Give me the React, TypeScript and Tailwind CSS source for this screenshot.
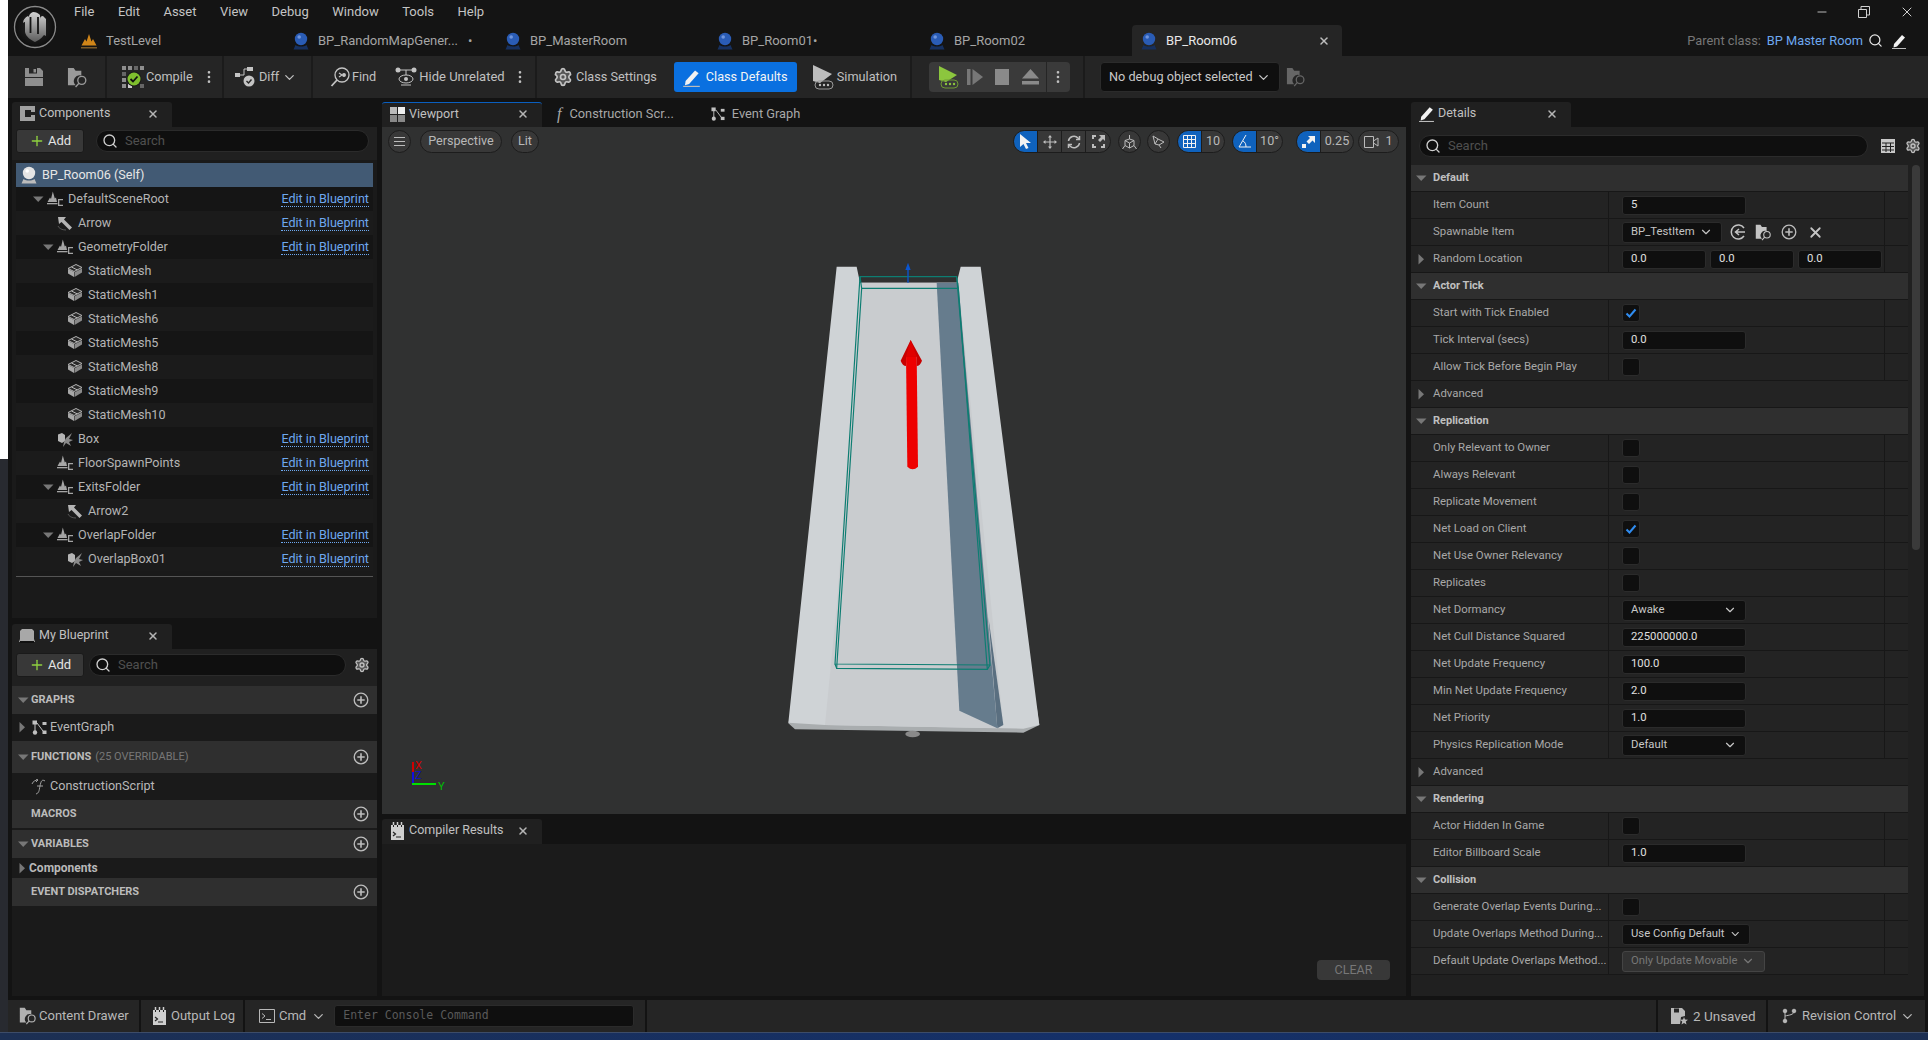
import { ChevronDown, Search, Settings, X, Plus, Minus, MoreVertical } from "lucide-react";
import React from "react";

const Caret = ({ open, className = "" }: { open: boolean; className?: string }) => (
    <svg width="11" height="11" viewBox="0 0 11 11" className={className}>
        {open ? <path d="M0 2.5h10.5L5.2 8z" fill="#777" /> : <path d="M2.5 0v10.5L8 5.2z" fill="#777" />}
    </svg>
);

const BlueprintIcon = ({ white }: { white?: boolean }) => (
    <svg width="18" height="20" viewBox="0 0 18 20">
        <circle cx="9" cy="8" r="6.200" fill={white ? "#e4e4e4" : "#2a5cb5"} />
        <circle cx="7.200" cy="6" r="1.800" fill={white ? "#fff" : "#6e94dc"} />
        <path d="M1.500 18.500 3.500 14c3 2 8 2 11 0l2 4.500z" fill={white ? "#bcbcbc" : "#16305f"} />
    </svg>
);

const LevelIcon = () => (
    <svg width="18" height="18" viewBox="0 0 18 18">
        <path d="M1.500 13.500 5 7l1.500 2.500L9 2l2.500 7.500L13 7l3.500 6.500z" fill="#d08518" />
        <rect x="1" y="15" width="16" height="1.500" fill="#7a5a28" />
    </svg>
);

const SceneIcon = () => (
    <svg width="17" height="16" viewBox="0 0 17 16">
        <path d="M0.500 11 3 6.500l1 1.500 1.800-7.500 2 7 1.200-1 1 4.500z" fill="#a5a5a5" />
        <rect x="0" y="12" width="10.500" height="1.300" fill="#a5a5a5" />
        <path d="M11 8h5v1.300h-3.700v4.400H16V15h-5z" fill="#a5a5a5" />
    </svg>
);

const ArrowIcon = () => (
    <svg width="16" height="15" viewBox="0 0 16 15">
        <path d="M1 1h8L7 3.500l8 8-2.500 2.500-8-8L2 8z" fill="#b5b5b5" />
        <path d="M1 10c1 2.500 4 4 8 4" stroke="#555" fill="none" />
    </svg>
);

const MeshIcon = () => (
    <svg width="16" height="16" viewBox="0 0 16 16">
        <path d="M1 5.500 9 1.500l6 3-8 4z" fill="#2a2a2a" stroke="#b5b5b5" />
        <path d="M1 6v4.500l6 3.500V9z" fill="#a8a8a8" />
        <path d="M7.500 14l7.500-4.500V5.500L7.500 9.200z" fill="#8a8a8a" />
        <path d="m4.500 4 6 3" stroke="#b5b5b5" />
    </svg>
);

const BoxIcon = () => (
    <svg width="16" height="15" viewBox="0 0 16 15">
        <path d="M1 2.500 5 1l3 2v6l-3 2-4-2z" fill="#b5b5b5" />
        <path d="m9 6 6-5-3 6 4 1-4 2 2 4-5-3-3 4 1-5z" fill="#8a8a8a" />
    </svg>
);

const PlusCircle = () => (
    <svg width="16" height="16" viewBox="0 0 16 16" fill="none" stroke="#bdbdbd" strokeWidth="1.300">
        <circle cx="8" cy="8" r="6.800" />
        <path d="M8 4.300v7.400M4.300 8h7.400" strokeWidth="1.600" />
    </svg>
);

const GearIcon = ({ size = 16, color = "#c0c0c0" }: { size?: number; color?: string }) => (
    <Settings size={size} style={{ color }} fill="#555" strokeWidth={2} />
);

const GraphIcon = ({ size = 15 }: { size?: number }) => (
    <svg width={size} height={size} viewBox="0 0 15 15" fill="#c0c0c0">
        <rect x="0.500" y="0.500" width="4.500" height="4" />
        <rect x="10.500" y="2" width="4" height="3" />
        <circle cx="3" cy="12.500" r="2.200" />
        <rect x="10.500" y="10.500" width="4" height="3.500" />
        <path d="M3 4v7M5 3l6 8" stroke="#c0c0c0" strokeWidth="1" />
    </svg>
);

const LogIcon = () => (
    <svg width="13" height="18" viewBox="0 0 13 18">
        <path d="M0 3h13v15H0z" fill="#cfcfcf" />
        <path d="M2.500 0v4M6.500 0v4M10.500 0v4" stroke="#cfcfcf" strokeWidth="1.500" />
        <path d="M2.500 3v2M6.500 3v2M10.500 3v2" stroke="#222" />
        <path d="m2 10 2.500 2L2 14M5 15h5" stroke="#222" strokeWidth="1.200" fill="none" />
    </svg>
);

const FolderSearch = ({ color = "#a8a8a8", size = 22 }: { color?: string; size?: number }) => (
    <svg width={size} height={size} viewBox="0 0 22 22">
        <path d="M1 1h6l2 3h6v5a6 6 0 0 0-6 10H1z" fill={color} />
        <circle cx="15.500" cy="14" r="4.200" fill="none" stroke={color} strokeWidth="1.400" />
        <path d="m12.500 17-3.500 4" stroke={color} strokeWidth="1.400" />
    </svg>
);

const PenIcon = ({ size = 16 }: { size?: number }) => (
    <svg width={size} height={size} viewBox="0 0 16 16">
        <path d="m3 11 8-9 3 2.500-8 9-3.500 1z" fill="#f2f2f2" />
        <path d="M1 15.500h14" stroke="#bbb" />
    </svg>
);

const PlayGreen = () => (
    <svg width="22" height="24" viewBox="0 0 22 24">
        <path d="M2 1v14l7 2 11-7z" fill="#8cc63e" />
        <rect x="4" y="15" width="17" height="8" rx="4" fill="none" stroke="#6f9a34" />
        <circle cx="9" cy="19" r="1.200" fill="#8cc63e" /><circle cx="13" cy="19" r="1.200" fill="#8cc63e" /><circle cx="17" cy="19" r="1.200" fill="#8cc63e" />
    </svg>
);

function Tab({ label, active, icon, mark }: { label: string; active?: boolean; icon: React.ReactNode; mark?: string }) {
    return (
        <div className={`flex h-[31px] items-center whitespace-nowrap pl-2 text-[13px] ${active ? "w-[210px] rounded-t bg-[#252525] text-[#e8e8e8]" : "w-[212px] text-[#a5a5a5]"}`}>
            {icon}
            <span className="ml-2">{label}</span>
            {mark && <span className="ml-2.5">{mark}</span>}
            {active && <X size={12} strokeWidth={3} className="ml-auto mr-3 text-[#bdbdbd]" />}
        </div>
    );
}

function TitleBar() {
    return (
        <div className="flex h-14 bg-[#141414]">
            <div className="w-16 pl-1 pt-1">
                <svg width="46" height="46" viewBox="0 0 46 46">
                    <defs>
                        <linearGradient id="ue" x1="0" y1="0" x2="0" y2="1">
                            <stop offset="0" stopColor="#d4d4d4" />
                            <stop offset="1" stopColor="#5c5c5c" />
                        </linearGradient>
                        <radialGradient id="uebg">
                            <stop offset="0" stopColor="#2c2c2c" />
                            <stop offset="1" stopColor="#0e0e0e" />
                        </radialGradient>
                    </defs>
                    <circle cx="23" cy="23" r="20.500" fill="url(#uebg)" stroke="#8a8a8a" strokeWidth="1.300" />
                    <path d="M16 12c-3 1.500-5 4-5 7 1-1 1.500-1 2-1v10c1 5 6 8 10 10 2-1 6-3 9-7l2 1V15l-3-3c-2 0-3 1-3 3V11c-2-2-4-3-7-3-3 1-4 3-4 5z" fill="url(#ue)" />
                    <path d="M18.500 13v16M26 13v17" stroke="#151515" strokeWidth="1.800" />
                </svg>
            </div>
            <div className="min-w-0 flex-1">
                <div className="flex h-[24px]">
                    <div className="flex items-center gap-[23.500px] pl-[2px] text-[13px] text-[#c4c4c4]">
                        {["File", "Edit", "Asset", "View", "Debug", "Window", "Tools", "Help"].map((m) => (
                            <span key={m}>{m}</span>
                        ))}
                    </div>
                    <div className="ml-auto flex items-center gap-[29px] pr-[13px] text-[#d0d0d0]">
                        <Minus size={14} strokeWidth={1.500} />
                        <svg width="12" height="12" viewBox="0 0 12 12" fill="none" stroke="currentColor"><path d="M.5 3.500h8v8h-8zM3 3.500V.5h8.500V9H8.500" /></svg>
                        <X size={16} strokeWidth={1.500} />
                    </div>
                </div>
                <div className="mt-px flex h-[31px]">
                    <Tab label="TestLevel" icon={<LevelIcon />} />
                    <Tab label="BP_RandomMapGener..." mark="•" icon={<BlueprintIcon />} />
                    <Tab label="BP_MasterRoom" icon={<BlueprintIcon />} />
                    <Tab label="BP_Room01•" icon={<BlueprintIcon />} />
                    <Tab label="BP_Room02" icon={<BlueprintIcon />} />
                    <Tab label="BP_Room06" active icon={<BlueprintIcon />} />
                    <div className="ml-auto flex items-center whitespace-nowrap pr-[21px] text-[12.800px]">
                        <span className="text-[#777]">Parent class:</span>
                        <span className="ml-1.5 text-[#6ea8ef]">BP Master Room</span>
                        <Search size={15} className="ml-[5px] text-[#e8e8e8]" />
                        <span className="ml-2"><PenIcon /></span>
                    </div>
                </div>
            </div>
        </div>
    );
}

const Sep = () => <div className="h-[42px] w-0.5 bg-[#1b1b1b]" />;
const Kebab = ({ className = "" }: { className?: string }) => <MoreVertical size={16} className={`text-[#c0c0c0] ${className}`} />;

function Toolbar() {
    return (
        <div className="flex h-[42px] items-center whitespace-nowrap bg-[#252525] text-[12.700px] text-[#c0c0c0]">
            <div className="flex w-[97px] items-center pl-[17px]">
                <svg width="18" height="18" viewBox="0 0 18 18" fill="#8e8e8e">
                    <path d="M0 0h15l3 3v15H0z" />
                    <rect x="4" y="0" width="8" height="5.500" fill="#252525" />
                    <rect x="8.500" y="1" width="2.500" height="3.500" />
                    <rect x="0" y="9" width="18" height="1" fill="#252525" />
                </svg>
                <span className="ml-[24px]"><FolderSearch size={21} color="#9a9a9a" /></span>
            </div>
            <Sep />
            <div className="flex w-[115px] items-center pl-[15px]">
                <svg width="22" height="24" viewBox="0 0 22 24">
                    <g fill="#8e8e8e">
                        <rect x="0" y="1" width="4" height="4" /><rect x="6" y="1" width="4" height="4" /><rect x="12" y="1" width="4" height="4" fill="#666" /><rect x="18" y="1" width="4" height="4" />
                        <rect x="0" y="7" width="4" height="4" fill="#666" /><rect x="0" y="13" width="4" height="4" /><rect x="0" y="19" width="4" height="4" />
                        <rect x="6" y="19" width="4" height="4" fill="#ccc" /><rect x="18" y="19" width="4" height="4" fill="#666" />
                    </g>
                    <circle cx="12" cy="14" r="7.500" fill="#1b1b1b" />
                    <circle cx="12" cy="14" r="6.500" fill="#7fbf2e" />
                    <path d="m8.500 14 2.500 2.500 4.500-5" stroke="#111" strokeWidth="1.800" fill="none" />
                </svg>
                <span className="ml-[2px]">Compile</span>
                <Kebab className="ml-[8px]" />
            </div>
            <Sep />
            <div className="flex w-[87px] items-center pl-[11px]">
                <svg width="20" height="22" viewBox="0 0 20 22" fill="#c4c4c4">
                    <rect x="0" y="7" width="5" height="4" /><rect x="12" y="1" width="6" height="4" />
                    <path d="M5 9h4V3h3" stroke="#c4c4c4" fill="none" />
                    <circle cx="14" cy="15" r="5.500" />
                    <path d="m11.500 15 2 2 3-3.500" stroke="#252525" strokeWidth="1.400" fill="none" />
                </svg>
                <span className="ml-1">Diff</span>
                <ChevronDown size={15} className="ml-[3px]" />
            </div>
            <Sep />
            <div className="flex w-[222px] items-center pl-[17px]">
                <svg width="20" height="20" viewBox="0 0 20 20" fill="none" stroke="#c4c4c4" strokeWidth="1.300">
                    <circle cx="12" cy="8" r="7" />
                    <path d="m7 13-5.500 6" strokeWidth="1.800" />
                    <circle cx="14" cy="8" r="1.300" fill="#c4c4c4" /><path d="m9 6 3 2-3 2" />
                </svg>
                <span className="ml-0.5">Find</span>
                <svg width="22" height="20" viewBox="0 0 22 20" fill="#c4c4c4" className="ml-[19px]">
                    <circle cx="3" cy="3" r="2.500" /><circle cx="19" cy="3" r="2.500" />
                    <path d="M3 3h16M11 3v5" stroke="#c4c4c4" />
                    <ellipse cx="11" cy="12" rx="7" ry="4" fill="none" stroke="#c4c4c4" />
                    <circle cx="11" cy="12" r="2" />
                    <path d="M6 18h10" stroke="#c4c4c4" />
                </svg>
                <span className="ml-0.5 text-[13px]">Hide Unrelated</span>
                <Kebab className="ml-[7px]" />
            </div>
            <Sep />
            <div className="flex w-[373px] items-center pl-4">
                <GearIcon size={20} color="#c4c4c4" />
                <span className="ml-[3px]">Class Settings</span>
                <div className="ml-[17px] flex h-[30px] w-[123px] items-center rounded-[3px] bg-[#0a70e0] pl-2 text-[#f4f4f4]">
                    <PenIcon size={19} />
                    <span className="ml-[5px]">Class Defaults</span>
                </div>
                <svg width="22" height="26" viewBox="0 0 22 26" className="ml-[15px]">
                    <path d="M1 1v16l7 2 12-9z" fill="#bdbdbd" />
                    <rect x="3" y="17" width="18" height="8" rx="4" fill="none" stroke="#9a9a9a" />
                    <circle cx="8" cy="21" r="1.200" fill="#bdbdbd" /><circle cx="12" cy="21" r="1.200" fill="#bdbdbd" /><circle cx="16" cy="21" r="1.200" fill="#bdbdbd" />
                </svg>
                <span className="ml-[3px]">Simulation</span>
            </div>
            <Sep />
            <div className="flex w-[171px] items-center pl-[17px]">
                <div className="flex h-[30px] w-[141px] items-center rounded bg-[#3a3a3a]">
                    <span className="ml-2"><PlayGreen /></span>
                    <svg width="18" height="18" viewBox="0 0 18 18" fill="#777" className="ml-[7px]"><rect x="1" y="1" width="3.500" height="16" /><path d="M6.500 1v16L17 9z" /></svg>
                    <svg width="14" height="16" viewBox="0 0 14 16" fill="#8a8a8a" className="ml-[11px]"><rect width="14" height="16" /></svg>
                    <svg width="17" height="16" viewBox="0 0 17 16" fill="#8a8a8a" className="ml-[13px]"><path d="M8.500 0 17 9.500H0z" /><rect y="12" width="17" height="3.500" /></svg>
                    <div className="ml-[7px] h-[30px] w-px bg-[#252525]" />
                    <Kebab className="ml-[3px]" />
                </div>
            </div>
            <Sep />
            <div className="ml-[15px] flex h-[30px] w-[180px] items-center rounded border border-[#2b2b2b] bg-[#0f0f0f] pl-2 text-[#c8c8c8]">
                <span>No debug object selected</span>
                <ChevronDown size={15} className="ml-[3px]" />
            </div>
            <span className="ml-[6px]"><FolderSearch color="#666" size={20} /></span>
        </div>
    );
}

function PanelTab({ label, icon, width = "w-[160px]", bar }: { label: string; icon: React.ReactNode; width?: string; bar?: boolean }) {
    return (
        <div className={`flex h-[25px] items-center whitespace-nowrap rounded-t-[3px] bg-[#202020] pb-0.5 pl-1 text-[12.500px] text-[#c0c0c0] ${width} ${bar ? "border-t border-[#0a5fc0]" : ""}`}>
            <span className="flex w-[22px] justify-center">{icon}</span>
            <span className="ml-px">{label}</span>
            <X size={12} strokeWidth={3} className="ml-auto mr-[13px] text-[#b5b5b5]" />
        </div>
    );
}

function AddButton() {
    return (
        <div className="flex h-6 w-[68px] items-center rounded-[3px] border border-[#1a1a1a] bg-[#383838] pl-3 text-[13px] text-[#e4e4e4]">
            <Plus size={16} strokeWidth={2} className="text-[#8fd13f]" />
            <span className="ml-[3px]">Add</span>
        </div>
    );
}

function SearchBox({ className = "" }: { className?: string }) {
    return (
        <div className={`flex h-[22px] items-center rounded-full border border-[#2b2b2b] bg-[#0f0f0f] pl-[5px] text-[13px] text-[#4f4f4f] ${className}`}>
            <Search size={16} className="text-[#d0d0d0]" />
            <span className="ml-[7px]">Search</span>
        </div>
    );
}

const TREE: [string, number, "scene" | "arrow" | "mesh" | "box", boolean | null, boolean][] = [
    ["DefaultSceneRoot", 0, "scene", true, true],
    ["Arrow", 1, "arrow", null, true],
    ["GeometryFolder", 1, "scene", true, true],
    ["StaticMesh", 2, "mesh", null, false],
    ["StaticMesh1", 2, "mesh", null, false],
    ["StaticMesh6", 2, "mesh", null, false],
    ["StaticMesh5", 2, "mesh", null, false],
    ["StaticMesh8", 2, "mesh", null, false],
    ["StaticMesh9", 2, "mesh", null, false],
    ["StaticMesh10", 2, "mesh", null, false],
    ["Box", 1, "box", null, true],
    ["FloorSpawnPoints", 1, "scene", null, true],
    ["ExitsFolder", 1, "scene", true, true],
    ["Arrow2", 2, "arrow", null, false],
    ["OverlapFolder", 1, "scene", true, true],
    ["OverlapBox01", 2, "box", null, true],
];

const INDENT = ["pl-[17px]", "pl-[27px]", "pl-[37px]"];

function ComponentsPanel() {
    return (
        <div className="flex h-[516px] flex-col">
            <PanelTab
                label="Components"
                icon={<svg width="15" height="15" viewBox="0 0 15 15" fill="#a0a0a0"><path d="M0 0h15v6h-4V4H5v7h6V9h4v6H0z" /></svg>}
            />
            <div className="flex-1 bg-[#1a1a1a]">
                <div className="flex h-[33px] items-center bg-[#202020] pb-[5px] pl-1">
                    <AddButton />
                    <SearchBox className="ml-3 w-[273px]" />
                </div>
                <div className="mx-1 mt-[3px]">
                    <div className="flex h-6 items-center bg-[#425a74] pl-1 text-[12.600px] text-[#e6e6e6]">
                        <BlueprintIcon white />
                        <span className="ml-1">BP_Room06 (Self)</span>
                    </div>
                    {TREE.map(([name, depth, kind, open, link], i) => (
                        <div key={name} className={`flex h-6 items-center pr-1 text-[12.600px] text-[#b4b4b4] ${INDENT[depth]} ${i % 2 === 0 ? "bg-[#151515]" : "bg-[#1b1b1b]"}`}>
                            <span className="flex w-[11px] justify-center">{open !== null && <Caret open={open} />}</span>
                            <span className="ml-[2px] flex w-[18px] justify-center">
                                {kind === "scene" && <SceneIcon />}
                                {kind === "arrow" && <ArrowIcon />}
                                {kind === "mesh" && <MeshIcon />}
                                {kind === "box" && <BoxIcon />}
                            </span>
                            <span className="ml-1">{name}</span>
                            {link && (
                                <span className="ml-auto border-b border-dotted border-[#6ea8ef] leading-[15px] text-[#6ea8ef]">Edit in Blueprint</span>
                            )}
                        </div>
                    ))}
                    <div className="mt-[5px] h-px bg-[#555]" />
                </div>
            </div>
        </div>
    );
}

function BpSection({ title, note, open, h = "h-7" }: { title: string; note?: string; open: boolean; h?: string }) {
    return (
        <div className={`flex items-center whitespace-nowrap bg-[#2f2f2f] pl-1.5 pr-2 text-[11px] font-bold text-[#bcbcbc] ${h}`}>
            <span className="flex w-[13px]">{open && <Caret open />}</span>
            <span>{title}</span>
            {note && <span className="ml-1 font-normal text-[#777]">{note}</span>}
            <span className="ml-auto"><PlusCircle /></span>
        </div>
    );
}

function MyBlueprint() {
    return (
        <div className="mt-1.5 flex flex-1 flex-col">
            <PanelTab
                label="My Blueprint"
                icon={<svg width="16" height="16" viewBox="0 0 16 16"><path d="M1 3 3 1h10l2 2v8l1 3H0l1-3z" fill="#a8a8a8" /><path d="M1 13h14v2H1z" fill="#111" /></svg>}
            />
            <div className="flex-1 bg-[#1a1a1a]">
                <div className="flex h-[37px] items-center bg-[#202020] pb-[5px] pl-1">
                    <AddButton />
                    <SearchBox className="ml-[5px] w-[257px]" />
                    <span className="ml-2"><GearIcon /></span>
                </div>
                <BpSection title="GRAPHS" open />
                <div className="flex h-[27px] items-center pl-[5px] text-[12.600px] text-[#b8b8b8]">
                    <Caret open={false} />
                    <span className="ml-1"><GraphIcon /></span>
                    <span className="ml-[3px]">EventGraph</span>
                </div>
                <BpSection title="FUNCTIONS" note="(25 OVERRIDABLE)" open h="h-8" />
                <div className="flex h-[27px] items-center pl-[19px] text-[12.600px] text-[#b8b8b8]">
                    <svg width="16" height="16" viewBox="0 0 16 16" fill="none" stroke="#a0a0a0">
                        <path d="M1 5c1-3 4-4 6-4M5 0l2 1-2 2M14 2c-3-2-4 0-5 5s-1 7-4 8M6 7h6" />
                    </svg>
                    <span className="ml-[3px]">ConstructionScript</span>
                </div>
                <BpSection title="MACROS" open={false} />
                <div className="h-0.5" />
                <BpSection title="VARIABLES" open />
                <div className="flex h-5 items-center pl-[5px] text-[12px] font-bold text-[#b8b8b8]">
                    <Caret open={false} />
                    <span className="ml-px">Components</span>
                </div>
                <BpSection title="EVENT DISPATCHERS" open={false} />
            </div>
        </div>
    );
}

const Seg = ({ children, blue }: { children: React.ReactNode; blue?: boolean }) => (
    <div className={`flex h-full w-6 shrink-0 items-center justify-center border-r border-[#1c1c1c] last:border-r-0 ${blue ? "bg-[#0f62bd]" : ""}`}>{children}</div>
);

const Pill = ({ children, className = "" }: { children: React.ReactNode; className?: string }) => (
    <div className={`flex h-[23px] shrink-0 items-center overflow-hidden rounded-full border border-[#1c1c1c] bg-[#383838] text-[12.600px] text-[#b8b8b8] ${className}`}>{children}</div>
);

function ViewportBar() {
    return (
        <div className="flex h-[29px] items-center pl-1.5 pr-[7px]">
            <Pill className="w-[23px] justify-center">
                <svg width="11" height="11" viewBox="0 0 11 11" stroke="#bbb"><path d="M0 1.500h11M0 5.500h11M0 9.500h11" /></svg>
            </Pill>
            <Pill className="ml-[9px] w-[82px] justify-center">Perspective</Pill>
            <Pill className="ml-[9px] w-[28px] justify-center">Lit</Pill>
            <Pill className="ml-auto w-[98px]">
                <Seg blue>
                    <svg width="13" height="15" viewBox="0 0 13 15" fill="#f2f2f2"><path d="M1 0v13l3.500-3 2.500 5 2.500-1-2.500-5H12z" /></svg>
                </Seg>
                <Seg>
                    <svg width="14" height="14" viewBox="0 0 14 14" stroke="#bdbdbd" fill="#bdbdbd"><path d="M7 1v12M1 7h12" strokeWidth="1.200" /><path d="m7 0 2 2.500H5zM7 14l2-2.500H5zM0 7l2.500-2v4zM14 7l-2.500-2v4z" stroke="none" /></svg>
                </Seg>
                <Seg>
                    <svg width="14" height="14" viewBox="0 0 14 14" fill="none" stroke="#bdbdbd" strokeWidth="1.500"><path d="M1.500 6A5.500 5.500 0 0 1 11 3l1.500 1.500M12.500 8A5.500 5.500 0 0 1 3 11L1.500 9.500" /><path d="M12.500 1v3.500H9M1.500 13V9.500H5" /></svg>
                </Seg>
                <Seg>
                    <svg width="13" height="13" viewBox="0 0 13 13" fill="#bdbdbd"><path d="M7 0h6v6L11 4 8 7 6 5l3-3zM0 9h2v2h2v2H0zM0 0h4v2H2v2H0zM11 9h2v4H9v-2h2z" /></svg>
                </Seg>
            </Pill>
            <Pill className="ml-[7px] w-[23px] justify-center">
                <svg width="15" height="16" viewBox="0 0 15 16" fill="none" stroke="#bdbdbd"><path d="M7.500 1v4M3 6.500 7.500 5 12 6.500v5L7.500 14 3 11.500zM7.500 9v5M3 6.500 7.500 9 12 6.500M3 11.500.5 15M12 11.500l2.500 3.500" /></svg>
            </Pill>
            <Pill className="ml-1.5 w-[23px] justify-center">
                <svg width="15" height="15" viewBox="0 0 15 15" fill="none" stroke="#bdbdbd"><path d="m2 2 5 3-3 5zm5 3 6 3-5 3-4-1M8 11l2 3" /></svg>
            </Pill>
            <Pill className="ml-[7px] w-12">
                <Seg blue>
                    <svg width="13" height="13" viewBox="0 0 13 13" fill="none" stroke="#f2f2f2"><path d="M.5.5h12v12H.5zM4.500.5v12M8.500.5v12M.5 4.500h12M.5 8.500h12" /></svg>
                </Seg>
                <span className="flex-1 text-center">10</span>
            </Pill>
            <Pill className="ml-[7px] w-[51px]">
                <Seg blue>
                    <svg width="14" height="13" viewBox="0 0 14 13" fill="none" stroke="#f2f2f2"><path d="M8 0 1 12h12M5 6c2 1 3 3 3 6" /></svg>
                </Seg>
                <span className="flex-1 text-center">10°</span>
            </Pill>
            <Pill className="ml-[13px] w-[58px]">
                <Seg blue>
                    <svg width="13" height="13" viewBox="0 0 13 13" fill="#f2f2f2"><rect y="9" width="4" height="4" /><path d="M6 1h7v7l-2.500-2.500L7 9 4.500 6.500 8 3z" /></svg>
                </Seg>
                <span className="flex-1 text-center">0.25</span>
            </Pill>
            <Pill className="ml-1 w-[41px] justify-center gap-1.5">
                <svg width="15" height="12" viewBox="0 0 15 12" fill="none" stroke="#bbb"><path d="M.5.5h9v11h-9zM9.500 5 14 2v8L9.500 7" /></svg>
                <span>1</span>
            </Pill>
        </div>
    );
}

function Scene() {
    return (
        <svg width="320" height="520" viewBox="0 0 960 1560" className="absolute left-[358px] top-[113px]">
            <path d="M145 1450 165 1468 850 1478 898 1455 890 1400H160z" fill="#a9adaf" />
            <path d="M290 80H350L360 128H650L662 80H722L898 1455 850 1466 255 1455 145 1448z" fill="#cfd3d6" />
            <path d="M362 128H655L790 1455 772 1465 255 1455 290 1100z" fill="#c9ccCF" />
            <path d="M590 128H655L772 1465 658 1412z" fill="#667c8d" />
            <path d="M745 1130 790 1455 772 1465z" fill="#5a6f80" />
            <g fill="none" stroke="#0d7d72" strokeWidth="3.500">
                <path d="M360 110H650L750 1275 285 1272z" />
                <path d="M365 145H655L742 1288 290 1285z" />
                <path d="M360 110 365 145M650 112 655 145M285 1272 290 1285M750 1275 742 1288" />
            </g>
            <path d="M504 68 496 90H502V128H506V90H512z" fill="#0a55cf" />
            <path d="M498 345H530L534 680Q518 695 502 680z" fill="#ee0000" />
            <path d="M512 300 482 362Q488 378 498 378V350H530V378Q540 378 546 362z" fill="#c80000" />
            <path d="M512 300 498 350H530z" fill="#e00000" />
            <ellipse cx="518" cy="1482" rx="22" ry="10" fill="#8a8a8a" />
        </svg>
    );
}

function Axes() {
    return (
        <div className="absolute left-[30px] top-[635px] h-[30px] w-[40px] text-[11px] leading-none">
            <div className="absolute left-0 top-0 h-[10px] w-0.5 bg-[#d00000]" />
            <div className="absolute left-0 top-[10px] h-[12px] w-0.5 bg-[#1010e0]" />
            <div className="absolute left-0 top-[21px] h-0.5 w-6 bg-[#00e000]" />
            <span className="absolute left-[3px] top-[-2px] text-[#d00000]">X</span>
            <span className="absolute left-[3px] top-[8px] text-[#1010c0]">Z</span>
            <span className="absolute left-[26px] top-[19px] text-[#00c000]">Y</span>
        </div>
    );
}

function CenterColumn() {
    return (
        <div className="ml-[5px] flex w-[1024px] flex-col">
            <div className="flex h-[25px]">
                <PanelTab
                    label="Viewport"
                    bar
                    icon={<svg width="15" height="15" viewBox="0 0 15 15"><rect width="7" height="7" fill="#bbb" /><rect x="8" width="7" height="7" fill="#eee" /><rect y="8" width="7" height="7" fill="#888" /><rect x="8" y="8" width="7" height="7" fill="#888" /></svg>}
                />
                <div className="flex items-center whitespace-nowrap pb-0.5 pl-[15px] text-[12.800px] text-[#a8a8a8]">
                    <span className="font-[family-name:'Liberation_Serif',serif] text-[16px] italic">f</span>
                    <span className="ml-2">Construction Scr...</span>
                    <span className="ml-[37px]"><GraphIcon size={14} /></span>
                    <span className="ml-[7px]">Event Graph</span>
                </div>
            </div>
            <div className="relative h-[687px] bg-[#303131]">
                <ViewportBar />
                <Scene />
                <Axes />
            </div>
            <div className="mt-[5px]">
                <PanelTab label="Compiler Results" icon={<LogIcon />} />
            </div>
            <div className="flex flex-1 items-end justify-end bg-[#1b1b1b] pb-4 pr-4">
                <div className="flex h-5 w-[73px] items-center justify-center rounded-sm bg-[#383838] text-[12.500px] text-[#777]">CLEAR</div>
            </div>
        </div>
    );
}

type Row =
    | { k: "head"; l: string }
    | { k: "text"; l: string; v: string }
    | { k: "drop"; l: string; v: string; w: string; dim?: boolean }
    | { k: "check"; l: string; on?: boolean }
    | { k: "exp"; l: string }
    | { k: "vec"; l: string }
    | { k: "spawn"; l: string };

const ROWS: Row[] = [
    { k: "head", l: "Default" },
    { k: "text", l: "Item Count", v: "5" },
    { k: "spawn", l: "Spawnable Item" },
    { k: "vec", l: "Random Location" },
    { k: "head", l: "Actor Tick" },
    { k: "check", l: "Start with Tick Enabled", on: true },
    { k: "text", l: "Tick Interval (secs)", v: "0.0" },
    { k: "check", l: "Allow Tick Before Begin Play" },
    { k: "exp", l: "Advanced" },
    { k: "head", l: "Replication" },
    { k: "check", l: "Only Relevant to Owner" },
    { k: "check", l: "Always Relevant" },
    { k: "check", l: "Replicate Movement" },
    { k: "check", l: "Net Load on Client", on: true },
    { k: "check", l: "Net Use Owner Relevancy" },
    { k: "check", l: "Replicates" },
    { k: "drop", l: "Net Dormancy", v: "Awake", w: "w-[124px]" },
    { k: "text", l: "Net Cull Distance Squared", v: "225000000.0" },
    { k: "text", l: "Net Update Frequency", v: "100.0" },
    { k: "text", l: "Min Net Update Frequency", v: "2.0" },
    { k: "text", l: "Net Priority", v: "1.0" },
    { k: "drop", l: "Physics Replication Mode", v: "Default", w: "w-[124px]" },
    { k: "exp", l: "Advanced" },
    { k: "head", l: "Rendering" },
    { k: "check", l: "Actor Hidden In Game" },
    { k: "text", l: "Editor Billboard Scale", v: "1.0" },
    { k: "head", l: "Collision" },
    { k: "check", l: "Generate Overlap Events During..." },
    { k: "drop", l: "Update Overlaps Method During...", v: "Use Config Default", w: "w-[128px]" },
    { k: "drop", l: "Default Update Overlaps Method...", v: "Only Update Movable", w: "w-[143px]", dim: true },
];

const Field = ({ v, w = "w-[124px]" }: { v: string; w?: string }) => (
    <div className={`flex h-[19px] items-center rounded-[3px] border border-[#2b2b2b] bg-[#0f0f0f] pl-2 text-[11.300px] text-[#e0e0e0] ${w}`}>{v}</div>
);

function Value({ row }: { row: Row }) {
    if (row.k === "text") return <Field v={row.v} />;
    if (row.k === "vec")
        return (
            <div className="flex gap-1">
                <Field v="0.0" w="w-[84px]" />
                <Field v="0.0" w="w-[84px]" />
                <Field v="0.0" w="w-[84px]" />
            </div>
        );
    if (row.k === "check")
        return (
            <div className="flex h-[18px] w-[18px] items-center justify-center rounded-[3px] border border-[#2b2b2b] bg-[#0f0f0f]">
                {row.on && (
                    <svg width="12" height="12" viewBox="0 0 12 12" fill="none" stroke="#2f8cf0" strokeWidth="2"><path d="m1.500 6.500 3 3 6-7" /></svg>
                )}
            </div>
        );
    if (row.k === "drop")
        return (
            <div className={`flex h-[21px] items-center whitespace-nowrap rounded-[3px] border pl-2 pr-2 text-[11.300px] ${row.w} ${row.dim ? "border-[#444] bg-[#323232] text-[#777]" : "border-[#2b2b2b] bg-[#0f0f0f] text-[#c8c8c8]"}`}>
                <span>{row.v}</span>
                <ChevronDown size={14} className={`${row.w === "w-[124px]" ? "ml-auto" : "ml-1"}`} />
            </div>
        );
    if (row.k === "spawn")
        return (
            <div className="flex items-center text-[#c4c4c4]">
                <div className="flex h-[21px] w-[100px] items-center whitespace-nowrap rounded-[3px] border border-[#2b2b2b] bg-[#0f0f0f] pl-2 text-[11.300px]">
                    <span>BP_TestItem</span>
                    <ChevronDown size={14} className="ml-1" />
                </div>
                <svg width="16" height="16" viewBox="0 0 16 16" fill="none" stroke="currentColor" strokeWidth="1.500" className="ml-2"><path d="M14 4a7 7 0 1 0 0 8M15 8H6m3-3L5.500 8 9 11" /></svg>
                <span className="ml-[9px]"><FolderSearch color="#c4c4c4" size={17} /></span>
                <span className="ml-[9px]"><PlusCircle /></span>
                <X size={17} strokeWidth={2.500} className="ml-[10px]" />
            </div>
        );
    return null;
}

function Details() {
    return (
        <div className="ml-[5px] flex w-[513px] flex-col">
            <PanelTab label="Details" icon={<PenIcon size={17} />} />
            <div className="flex-1 bg-[#202020]">
                <div className="flex h-[38px] items-center pl-2">
                    <SearchBox className="w-[449px]" />
                    <svg width="14" height="14" viewBox="0 0 14 14" fill="#c8c8c8" className="ml-[13px]">
                        <path d="M0 0h14v14H0z" /><path d="M1 4h12M1 7.500h12M1 11h12M5 4v9M9.500 4v9" stroke="#202020" />
                    </svg>
                    <span className="ml-2.5"><GearIcon /></span>
                </div>
                <div className="flex">
                    <div className="w-[497px]">
                        {ROWS.map((row, i) =>
                            row.k === "head" ? (
                                <div key={i} className="flex h-[27px] items-center border-b border-[#171717] bg-[#2f2f2f] pl-[5px] text-[11px] font-bold text-[#c0c0c0]">
                                    <Caret open />
                                    <span className="ml-[6px]">{row.l}</span>
                                </div>
                            ) : row.k === "exp" ? (
                                <div key={i} className="flex h-[27px] items-center border-b border-[#171717] bg-[#232323] pl-[5px] text-[11.400px] text-[#a8a8a8]">
                                    <Caret open={false} />
                                    <span className="ml-[6px]">{row.l}</span>
                                </div>
                            ) : (
                                <div key={i} className="flex h-[27px] items-center border-b border-[#171717] bg-[#232323] text-[11.400px] text-[#a8a8a8]">
                                    <div className="flex h-full w-[198px] shrink-0 items-center whitespace-nowrap border-r border-[#171717] pl-[5px]">
                                        <span className="w-[11px]">{row.k === "vec" && <Caret open={false} />}</span>
                                        <span className="ml-[6px]">{row.l}</span>
                                    </div>
                                    <div className="flex h-full w-[276px] shrink-0 items-center border-r border-[#171717] pl-[13px]">
                                        <Value row={row} />
                                    </div>
                                </div>
                            )
                        )}
                    </div>
                    <div className="ml-1 w-2">
                        <div className="h-[385px] w-2 rounded bg-[#3a3a3a]" />
                    </div>
                </div>
            </div>
        </div>
    );
}

function StatusBar() {
    const cell = "flex h-8 items-center whitespace-nowrap bg-[#252525] text-[13px] text-[#b8b8b8]";
    return (
        <div className="flex h-8 gap-0.5 pr-[3px]">
            <div className={`${cell} w-[131px] pl-[11px]`}>
                <FolderSearch color="#b0b0b0" size={18} />
                <span className="ml-0.5">Content Drawer</span>
            </div>
            <div className={`${cell} w-[102px] pl-3`}>
                <LogIcon />
                <span className="ml-[5px]">Output Log</span>
            </div>
            <div className={`${cell} w-[400px] pl-3.5`}>
                <svg width="16" height="14" viewBox="0 0 16 14" fill="none" stroke="#b8b8b8"><path d="M.5.5h15v13H.5zM3 4.500 6 7l-3 2.500M7 10.500h5" /></svg>
                <span className="ml-1">Cmd</span>
                <ChevronDown size={15} className="ml-[5px]" />
                <div className="ml-2 flex h-[22px] w-[300px] items-center rounded-[3px] border border-[#2b2b2b] bg-[#0f0f0f] pl-2 font-[family-name:'DejaVu_Sans_Mono',monospace] text-[11.500px] text-[#5a5a5a]">
                    Enter Console Command
                </div>
            </div>
            <div className={`${cell} flex-1`} />
            <div className={`${cell} w-[108px] pl-[13px]`}>
                <svg width="17" height="17" viewBox="0 0 17 17" fill="#b8b8b8">
                    <path d="M0 0h11l3 3v5l-4 1-1 7H0z" />
                    <rect x="3" y="0.500" width="5" height="4" fill="#252525" />
                    <path d="m13 9 1 2.500 3 .3-2.200 1.700.7 3-2.500-1.600-2.500 1.600.7-3L9 11.800l3-.3z" />
                </svg>
                <span className="ml-[5px] text-[13.500px]">2 Unsaved</span>
            </div>
            <div className={`${cell} w-[157px] pl-[14px]`}>
                <svg width="15" height="16" viewBox="0 0 15 16" fill="#b8b8b8" stroke="#b8b8b8"><circle cx="3" cy="3" r="1.800" /><circle cx="12" cy="3" r="1.800" /><circle cx="3" cy="13" r="1.800" /><path d="M3 3v10M12 3c0 4-5 4-9 5" fill="none" /></svg>
                <span className="ml-[5px]">Revision Control</span>
                <ChevronDown size={15} className="ml-1" />
            </div>
        </div>
    );
}

export default function App() {
    return (
        <div className="flex h-[1040px] w-[1928px] flex-col overflow-hidden bg-[#131313] font-[family-name:Roboto,sans-serif]">
            <div className="flex h-[1032px]">
                <div className="flex w-2 shrink-0 flex-col">
                    <div className="h-[459px] bg-white" />
                    <div className="flex-1 bg-[#282a30]" />
                </div>
                <div className="flex min-w-0 flex-1 flex-col">
                    <TitleBar />
                    <Toolbar />
                    <div className="flex h-[902px] py-1 pl-1">
                        <div className="flex w-[365px] flex-col">
                            <ComponentsPanel />
                            <MyBlueprint />
                        </div>
                        <CenterColumn />
                        <Details />
                    </div>
                    <StatusBar />
                </div>
            </div>
            <div className="h-2 border-t border-[#3d4c68] bg-[linear-gradient(90deg,#1c2f52,#14306a_60%,#1c2f52)]" />
        </div>
    );
}
